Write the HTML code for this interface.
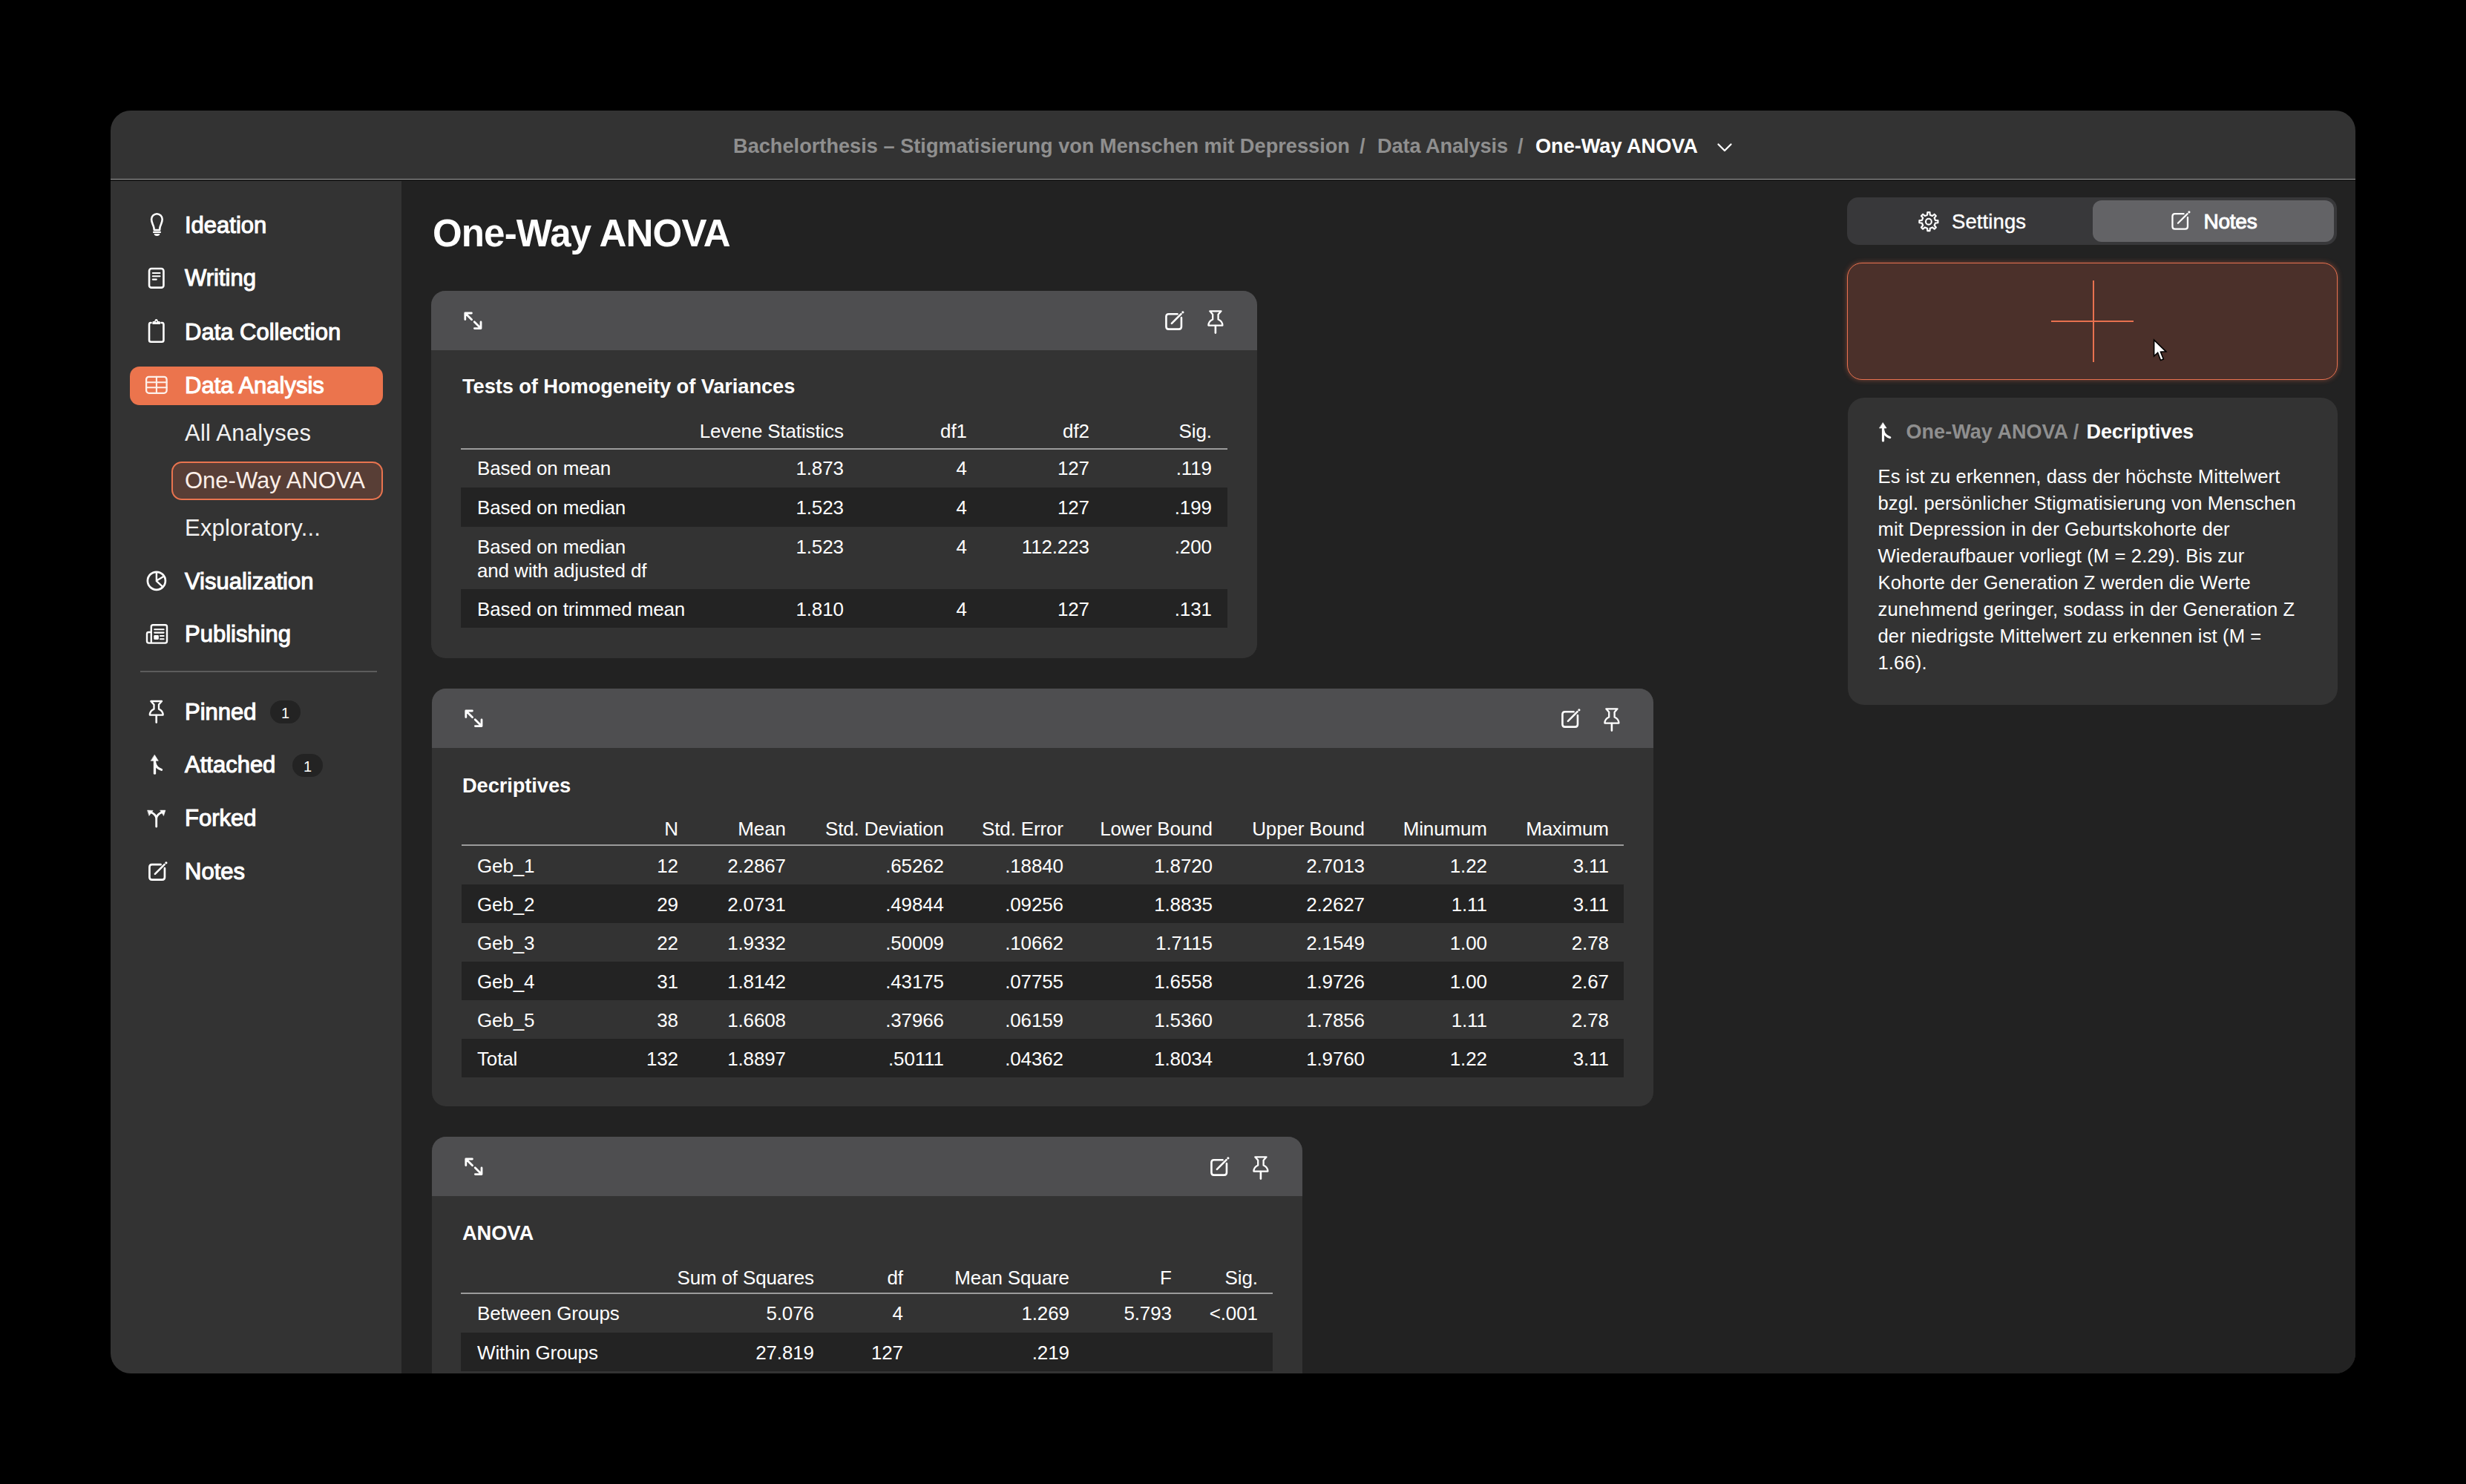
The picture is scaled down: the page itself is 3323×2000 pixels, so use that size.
<!DOCTYPE html>
<html><head><meta charset="utf-8">
<style>
html,body{margin:0;padding:0;background:#000;width:3323px;height:2000px;overflow:hidden;}
body{font-family:"Liberation Sans",sans-serif;position:relative;color:#fff;}
.t{position:absolute;line-height:1;white-space:nowrap;}
.r{position:absolute;}
svg.i{position:absolute;overflow:visible;fill:none;stroke:#fff;stroke-linecap:round;stroke-linejoin:round;}
</style></head><body>
<div class="r" style="left:149px;top:149px;width:3025px;height:1702px;background:#333333;border-radius:27px;overflow:hidden;">
<div class="r" style="left:392px;top:93px;right:0;bottom:0;background:#222222;"></div>
<div class="r" style="left:0;top:91.6px;right:0;height:1.6px;background:#9a9a9a;"></div>
<div class="r" style="left:0;top:93.19999999999999px;right:0;height:2px;background:#1c1c1c;"></div>
</div>
<div class="t" style="top:183.0px;font-size:27.2px;color:#8f8f8f;font-weight:700;left:988px;">Bachelorthesis – Stigmatisierung von Menschen mit Depression</div>
<div class="t" style="top:183.0px;font-size:27.2px;color:#8f8f8f;font-weight:700;left:1832px;">/</div>
<div class="t" style="top:183.0px;font-size:27.2px;color:#8f8f8f;font-weight:700;letter-spacing:-0.1px;left:1856px;">Data Analysis</div>
<div class="t" style="top:183.0px;font-size:27.2px;color:#8f8f8f;font-weight:700;left:2045px;">/</div>
<div class="t" style="top:183.0px;font-size:27.2px;font-weight:700;letter-spacing:-0.05px;left:2069px;">One-Way ANOVA</div>
<svg class="i" style="left:2310px;top:186px;" width="28" height="24" viewBox="0 0 28 24"><path d="M5.5 8.5 L14 17 L22.5 8.5" stroke-width="2.3"/></svg>
<div class="t" style="top:287.6px;font-size:31px;left:249px;-webkit-text-stroke:1.1px #fff;">Ideation</div>
<div class="t" style="top:359.4px;font-size:31px;left:249px;-webkit-text-stroke:1.1px #fff;">Writing</div>
<div class="t" style="top:431.5px;font-size:31px;left:249px;-webkit-text-stroke:1.1px #fff;">Data Collection</div>
<div class="r" style="left:175px;top:494px;width:341px;height:52px;background:#eb744d;border-radius:13px;"></div>
<div class="t" style="top:503.5px;font-size:31px;left:249px;-webkit-text-stroke:1.1px #fff;">Data Analysis</div>
<div class="t" style="top:567.7px;font-size:31px;color:#f2f2f2;letter-spacing:0.25px;left:249px;">All Analyses</div>
<div class="r" style="left:231px;top:622px;width:285px;height:52px;background:#583e36;border:2.5px solid #e9744f;border-radius:14px;box-sizing:border-box;"></div>
<div class="t" style="top:631.8px;font-size:31px;color:#fbeee8;left:249px;">One-Way ANOVA</div>
<div class="t" style="top:696.0px;font-size:31px;color:#f2f2f2;letter-spacing:0.2px;left:249px;">Exploratory...</div>
<div class="t" style="top:767.6px;font-size:31px;left:249px;-webkit-text-stroke:1.1px #fff;">Visualization</div>
<div class="t" style="top:839.4px;font-size:31px;left:249px;-webkit-text-stroke:1.1px #fff;">Publishing</div>
<div class="r" style="left:189px;top:904px;width:319px;height:2px;background:#5c5c5c;"></div>
<div class="t" style="top:943.5px;font-size:31px;left:249px;-webkit-text-stroke:1.1px #fff;">Pinned</div>
<div class="t" style="top:1015.4px;font-size:31px;left:249px;-webkit-text-stroke:1.1px #fff;">Attached</div>
<div class="t" style="top:1087.3px;font-size:31px;left:249px;-webkit-text-stroke:1.1px #fff;">Forked</div>
<div class="t" style="top:1159.2px;font-size:31px;left:249px;-webkit-text-stroke:1.1px #fff;">Notes</div>
<div class="r" style="left:364px;top:944px;width:41px;height:31px;background:#232323;border-radius:16px;"></div>
<div class="t" style="top:951.1px;font-size:20px;left:-615.5px;width:2000px;text-align:center;">1</div>
<div class="r" style="left:394px;top:1016px;width:41px;height:31px;background:#232323;border-radius:16px;"></div>
<div class="t" style="top:1023.1px;font-size:20px;left:-585.5px;width:2000px;text-align:center;">1</div>
<svg class="i" style="left:190px;top:280px;" width="50" height="50" viewBox="0 0 50 50"><path d="M17.8 30 L17.3 26.5 C16.6 22.8 14.1 20.3 14.1 15.6 A7.3 7.3 0 0 1 28.7 15.6 C28.7 20.3 26.2 22.8 25.5 26.5 L25.1 30 Z" stroke-width="2.6"/><path d="M17 32.9 H26" stroke-width="2.1"/><path d="M17.6 35 H25.4 Q25.2 37.9 21.5 37.9 Q17.8 37.9 17.6 35 Z" fill="#fff" stroke="none"/></svg>
<svg class="i" style="left:190px;top:352px;" width="50" height="50" viewBox="0 0 50 50"><rect x="11.05" y="10.05" width="19.4" height="25.6" rx="3" stroke-width="2.6"/><path d="M15.8 16 H25.5 M15.8 20.2 H25.5 M15.8 24.6 H20.8" stroke-width="2.1"/></svg>
<svg class="i" style="left:190px;top:422px;" width="50" height="50" viewBox="0 0 50 50"><path d="M13.5 13 H12.8 Q11.05 13 11.05 15.5 V36.5 Q11.05 38.7 13.5 38.7 H28 Q30.45 38.7 30.45 36.5 V15.5 Q30.45 13 28.5 13 H27.5" stroke-width="2.6"/><path d="M15.4 15 V12.3 Q15.4 11 17 11 H18.3 Q18.6 8.1 20.6 8.1 Q22.6 8.1 22.9 11 H24.3 Q25.9 11 25.9 12.3 V15 Z" fill="#fff" stroke="none"/><circle cx="20.6" cy="11.3" r="0.9" fill="#333" stroke="none"/></svg>
<svg class="i" style="left:190px;top:495px;stroke:#fdf0ea;" width="50" height="50" viewBox="0 0 50 50"><rect x="7.1" y="12.9" width="27.5" height="21.9" rx="3.5" stroke-width="2.3"/><path d="M7.1 20.2 H34.6 M7.1 27.3 H34.6 M20.9 12.9 V34.8" stroke-width="2.1"/></svg>
<svg class="i" style="left:190px;top:758px;" width="50" height="50" viewBox="0 0 50 50"><circle cx="20.9" cy="24.8" r="12" stroke-width="2.7"/><path d="M20.9 13 V25.2 L28.8 32.3 M21.5 24.2 L30.6 18.8" stroke-width="2.4" stroke-linecap="butt"/></svg>
<svg class="i" style="left:190px;top:830px;" width="50" height="50" viewBox="0 0 50 50"><path d="M13.8 36.6 H32.6 Q35 36.6 35 34 V14.6 Q35 12.2 32.6 12.2 H16.2 Q13.8 12.2 13.8 14.6 V36.6 H10.5 Q8 36.6 8 34 V24.2 Q8 22 10.3 22 H13.8" stroke-width="2.4"/><path d="M18.2 18.2 H30.6 M18.2 22.6 H30.6 M26 27 H30.6 M26 31.3 H30.6" stroke-width="2.1"/><rect x="17.3" y="26" width="6.6" height="6" rx="1.2" fill="#fff" stroke="none"/></svg>
<svg class="i" style="left:190px;top:935px;" width="50" height="50" viewBox="0 0 50 50"><path d="M13.3 10 H28 L24 14.6 V20.6 C26.8 21.8 29.6 24.5 29.7 28.6 H11.8 C11.9 24.5 14.7 21.8 17.5 20.6 V14.6 Z" stroke-width="2.3"/><path d="M20.7 29 V35.5 L20.7 38.6" stroke-width="2.6"/></svg>
<svg class="i" style="left:190px;top:1007px;" width="50" height="50" viewBox="0 0 50 50"><path d="M18.4 10.6 L23.3 18.3 H13.5 Z" fill="#fff" stroke="#fff" stroke-width="0.6"/><path d="M18.5 17 V35.2" stroke-width="3.3"/><path d="M18.8 21 C19.5 26 22.5 28.5 27.6 30.4" stroke-width="3.1"/></svg>
<svg class="i" style="left:190px;top:1078px;" width="50" height="50" viewBox="0 0 50 50"><path d="M20.7 36 V25 C20.7 21.5 17 18 13.5 16.8 M20.7 25 C20.7 21.5 24.5 18 28 16.8" stroke-width="2.8"/><path d="M8.9 14.1 L16.1 14.4 L11.1 21.1 Z M26 14.1 L32.9 14.1 L30.6 21.1 Z" fill="#fff" stroke="#fff" stroke-width="0.6"/></svg>
<svg class="i" style="left:190px;top:1150px;" width="50" height="50" viewBox="0 0 50 50"><path d="M26.6 15.2 H14.8 Q11.45 15.2 11.45 18.6 V32.2 Q11.45 35.6 14.8 35.6 H28.6 Q31.95 35.6 31.95 32.2 V20" stroke-width="2.7"/><path d="M18.9 27.8 L31.6 15.1" stroke-width="2.6"/><circle cx="33.9" cy="12.8" r="1.6" fill="#fff" stroke="none"/></svg>
<div class="t" style="top:288.8px;font-size:51px;font-weight:700;letter-spacing:-0.85px;left:583px;">One-Way ANOVA</div>
<div class="r" style="left:581px;top:392px;width:1113px;height:495px;background:#333333;border-radius:19px 19px 19px 19px;overflow:hidden;"><div class="r" style="left:0;top:0;right:0;height:80px;background:#4e4e50;"></div></div>
<svg class="i" style="left:610px;top:400px;" width="60" height="60" viewBox="0 0 60 60"><path d="M16.8 30.6 V22 H25.4 M17.6 22.8 L25.6 30.8 M38 34 V42.6 H29.4 M37.2 41.8 L29.2 33.8" stroke-width="2.8"/></svg>
<svg class="i" style="left:1560.1px;top:407.9px;" width="50" height="50" viewBox="0 0 50 50"><path d="M26.6 15.2 H14.8 Q11.45 15.2 11.45 18.6 V32.2 Q11.45 35.6 14.8 35.6 H28.6 Q31.95 35.6 31.95 32.2 V20" stroke-width="2.6"/><path d="M18.9 27.8 L31.6 15.1" stroke-width="2.6"/><circle cx="33.9" cy="12.8" r="1.6" fill="#fff" stroke="none"/></svg>
<svg class="i" style="left:1616.6px;top:408.6px;" width="50" height="50" viewBox="0 0 50 50"><path d="M13.3 10.3 H28.5 L24.6 14.8 V21.5 C27.5 22.7 30.3 25.4 30.4 29.6 H11.4 C11.5 25.4 14.3 22.7 17.2 21.5 V14.8 Z" stroke-width="2.3"/><path d="M20.9 30 V36.5 L20.9 39.6" stroke-width="2.6"/></svg>
<div class="t" style="top:507.1px;font-size:27.3px;font-weight:700;letter-spacing:-0.1px;left:623px;">Tests of Homogeneity of Variances</div>
<div class="t" style="top:568.0px;font-size:26px;letter-spacing:-0.15px;right:2186.2px;text-align:right;">Levene Statistics</div>
<div class="t" style="top:568.0px;font-size:26px;letter-spacing:-0.15px;right:2020.2px;text-align:right;">df1</div>
<div class="t" style="top:568.0px;font-size:26px;letter-spacing:-0.15px;right:1855.2px;text-align:right;">df2</div>
<div class="t" style="top:568.0px;font-size:26px;letter-spacing:-0.15px;right:1690.2px;text-align:right;">Sig.</div>
<div class="r" style="left:621px;top:604px;width:1033px;height:2px;background:#9b9b9b;"></div>
<div class="t" style="top:618.0px;font-size:26px;letter-spacing:-0.15px;left:643px;">Based on mean</div>
<div class="t" style="top:618.0px;font-size:26px;letter-spacing:-0.15px;right:2186.2px;text-align:right;">1.873</div>
<div class="t" style="top:618.0px;font-size:26px;letter-spacing:-0.15px;right:2020.2px;text-align:right;">4</div>
<div class="t" style="top:618.0px;font-size:26px;letter-spacing:-0.15px;right:1855.2px;text-align:right;">127</div>
<div class="t" style="top:618.0px;font-size:26px;letter-spacing:-0.15px;right:1690.2px;text-align:right;">.119</div>
<div class="r" style="left:621px;top:657px;width:1033px;height:53px;background:#232323;"></div>
<div class="t" style="top:670.5px;font-size:26px;letter-spacing:-0.15px;left:643px;">Based on median</div>
<div class="t" style="top:670.5px;font-size:26px;letter-spacing:-0.15px;right:2186.2px;text-align:right;">1.523</div>
<div class="t" style="top:670.5px;font-size:26px;letter-spacing:-0.15px;right:2020.2px;text-align:right;">4</div>
<div class="t" style="top:670.5px;font-size:26px;letter-spacing:-0.15px;right:1855.2px;text-align:right;">127</div>
<div class="t" style="top:670.5px;font-size:26px;letter-spacing:-0.15px;right:1690.2px;text-align:right;">.199</div>
<div class="t" style="top:724.0px;font-size:26px;letter-spacing:-0.15px;left:643px;">Based on median</div>
<div class="t" style="top:756.0px;font-size:26px;letter-spacing:-0.15px;left:643px;">and with adjusted df</div>
<div class="t" style="top:724.0px;font-size:26px;letter-spacing:-0.15px;right:2186.2px;text-align:right;">1.523</div>
<div class="t" style="top:724.0px;font-size:26px;letter-spacing:-0.15px;right:2020.2px;text-align:right;">4</div>
<div class="t" style="top:724.0px;font-size:26px;letter-spacing:-0.15px;right:1855.2px;text-align:right;">112.223</div>
<div class="t" style="top:724.0px;font-size:26px;letter-spacing:-0.15px;right:1690.2px;text-align:right;">.200</div>
<div class="r" style="left:621px;top:794px;width:1033px;height:52px;background:#232323;"></div>
<div class="t" style="top:808.0px;font-size:26px;letter-spacing:-0.15px;left:643px;">Based on trimmed mean</div>
<div class="t" style="top:808.0px;font-size:26px;letter-spacing:-0.15px;right:2186.2px;text-align:right;">1.810</div>
<div class="t" style="top:808.0px;font-size:26px;letter-spacing:-0.15px;right:2020.2px;text-align:right;">4</div>
<div class="t" style="top:808.0px;font-size:26px;letter-spacing:-0.15px;right:1855.2px;text-align:right;">127</div>
<div class="t" style="top:808.0px;font-size:26px;letter-spacing:-0.15px;right:1690.2px;text-align:right;">.131</div>
<div class="r" style="left:582px;top:928px;width:1646px;height:563px;background:#333333;border-radius:19px 19px 19px 19px;overflow:hidden;"><div class="r" style="left:0;top:0;right:0;height:80px;background:#4e4e50;"></div></div>
<svg class="i" style="left:611px;top:936px;" width="60" height="60" viewBox="0 0 60 60"><path d="M16.8 30.6 V22 H25.4 M17.6 22.8 L25.6 30.8 M38 34 V42.6 H29.4 M37.2 41.8 L29.2 33.8" stroke-width="2.8"/></svg>
<svg class="i" style="left:2094.1px;top:943.9px;" width="50" height="50" viewBox="0 0 50 50"><path d="M26.6 15.2 H14.8 Q11.45 15.2 11.45 18.6 V32.2 Q11.45 35.6 14.8 35.6 H28.6 Q31.95 35.6 31.95 32.2 V20" stroke-width="2.6"/><path d="M18.9 27.8 L31.6 15.1" stroke-width="2.6"/><circle cx="33.9" cy="12.8" r="1.6" fill="#fff" stroke="none"/></svg>
<svg class="i" style="left:2150.6px;top:944.6px;" width="50" height="50" viewBox="0 0 50 50"><path d="M13.3 10.3 H28.5 L24.6 14.8 V21.5 C27.5 22.7 30.3 25.4 30.4 29.6 H11.4 C11.5 25.4 14.3 22.7 17.2 21.5 V14.8 Z" stroke-width="2.3"/><path d="M20.9 30 V36.5 L20.9 39.6" stroke-width="2.6"/></svg>
<div class="t" style="top:1044.5px;font-size:27.3px;font-weight:700;letter-spacing:-0.1px;left:623px;">Decriptives</div>
<div class="t" style="top:1104.0px;font-size:26px;letter-spacing:-0.15px;right:2409.2px;text-align:right;">N</div>
<div class="t" style="top:1104.0px;font-size:26px;letter-spacing:-0.15px;right:2264.2px;text-align:right;">Mean</div>
<div class="t" style="top:1104.0px;font-size:26px;letter-spacing:-0.15px;right:2051.2px;text-align:right;">Std. Deviation</div>
<div class="t" style="top:1104.0px;font-size:26px;letter-spacing:-0.15px;right:1890.2px;text-align:right;">Std. Error</div>
<div class="t" style="top:1104.0px;font-size:26px;letter-spacing:-0.15px;right:1689.2px;text-align:right;">Lower Bound</div>
<div class="t" style="top:1104.0px;font-size:26px;letter-spacing:-0.15px;right:1484.2px;text-align:right;">Upper Bound</div>
<div class="t" style="top:1104.0px;font-size:26px;letter-spacing:-0.15px;right:1319.2px;text-align:right;">Minumum</div>
<div class="t" style="top:1104.0px;font-size:26px;letter-spacing:-0.15px;right:1155.2px;text-align:right;">Maximum</div>
<div class="r" style="left:622px;top:1138px;width:1566px;height:2px;background:#9b9b9b;"></div>
<div class="t" style="top:1154.0px;font-size:26px;letter-spacing:-0.15px;left:643px;">Geb_1</div>
<div class="t" style="top:1154.0px;font-size:26px;letter-spacing:-0.15px;right:2409.2px;text-align:right;">12</div>
<div class="t" style="top:1154.0px;font-size:26px;letter-spacing:-0.15px;right:2264.2px;text-align:right;">2.2867</div>
<div class="t" style="top:1154.0px;font-size:26px;letter-spacing:-0.15px;right:2051.2px;text-align:right;">.65262</div>
<div class="t" style="top:1154.0px;font-size:26px;letter-spacing:-0.15px;right:1890.2px;text-align:right;">.18840</div>
<div class="t" style="top:1154.0px;font-size:26px;letter-spacing:-0.15px;right:1689.2px;text-align:right;">1.8720</div>
<div class="t" style="top:1154.0px;font-size:26px;letter-spacing:-0.15px;right:1484.2px;text-align:right;">2.7013</div>
<div class="t" style="top:1154.0px;font-size:26px;letter-spacing:-0.15px;right:1319.2px;text-align:right;">1.22</div>
<div class="t" style="top:1154.0px;font-size:26px;letter-spacing:-0.15px;right:1155.2px;text-align:right;">3.11</div>
<div class="r" style="left:622px;top:1192px;width:1566px;height:52px;background:#232323;"></div>
<div class="t" style="top:1206.0px;font-size:26px;letter-spacing:-0.15px;left:643px;">Geb_2</div>
<div class="t" style="top:1206.0px;font-size:26px;letter-spacing:-0.15px;right:2409.2px;text-align:right;">29</div>
<div class="t" style="top:1206.0px;font-size:26px;letter-spacing:-0.15px;right:2264.2px;text-align:right;">2.0731</div>
<div class="t" style="top:1206.0px;font-size:26px;letter-spacing:-0.15px;right:2051.2px;text-align:right;">.49844</div>
<div class="t" style="top:1206.0px;font-size:26px;letter-spacing:-0.15px;right:1890.2px;text-align:right;">.09256</div>
<div class="t" style="top:1206.0px;font-size:26px;letter-spacing:-0.15px;right:1689.2px;text-align:right;">1.8835</div>
<div class="t" style="top:1206.0px;font-size:26px;letter-spacing:-0.15px;right:1484.2px;text-align:right;">2.2627</div>
<div class="t" style="top:1206.0px;font-size:26px;letter-spacing:-0.15px;right:1319.2px;text-align:right;">1.11</div>
<div class="t" style="top:1206.0px;font-size:26px;letter-spacing:-0.15px;right:1155.2px;text-align:right;">3.11</div>
<div class="t" style="top:1258.0px;font-size:26px;letter-spacing:-0.15px;left:643px;">Geb_3</div>
<div class="t" style="top:1258.0px;font-size:26px;letter-spacing:-0.15px;right:2409.2px;text-align:right;">22</div>
<div class="t" style="top:1258.0px;font-size:26px;letter-spacing:-0.15px;right:2264.2px;text-align:right;">1.9332</div>
<div class="t" style="top:1258.0px;font-size:26px;letter-spacing:-0.15px;right:2051.2px;text-align:right;">.50009</div>
<div class="t" style="top:1258.0px;font-size:26px;letter-spacing:-0.15px;right:1890.2px;text-align:right;">.10662</div>
<div class="t" style="top:1258.0px;font-size:26px;letter-spacing:-0.15px;right:1689.2px;text-align:right;">1.7115</div>
<div class="t" style="top:1258.0px;font-size:26px;letter-spacing:-0.15px;right:1484.2px;text-align:right;">2.1549</div>
<div class="t" style="top:1258.0px;font-size:26px;letter-spacing:-0.15px;right:1319.2px;text-align:right;">1.00</div>
<div class="t" style="top:1258.0px;font-size:26px;letter-spacing:-0.15px;right:1155.2px;text-align:right;">2.78</div>
<div class="r" style="left:622px;top:1296px;width:1566px;height:52px;background:#232323;"></div>
<div class="t" style="top:1310.0px;font-size:26px;letter-spacing:-0.15px;left:643px;">Geb_4</div>
<div class="t" style="top:1310.0px;font-size:26px;letter-spacing:-0.15px;right:2409.2px;text-align:right;">31</div>
<div class="t" style="top:1310.0px;font-size:26px;letter-spacing:-0.15px;right:2264.2px;text-align:right;">1.8142</div>
<div class="t" style="top:1310.0px;font-size:26px;letter-spacing:-0.15px;right:2051.2px;text-align:right;">.43175</div>
<div class="t" style="top:1310.0px;font-size:26px;letter-spacing:-0.15px;right:1890.2px;text-align:right;">.07755</div>
<div class="t" style="top:1310.0px;font-size:26px;letter-spacing:-0.15px;right:1689.2px;text-align:right;">1.6558</div>
<div class="t" style="top:1310.0px;font-size:26px;letter-spacing:-0.15px;right:1484.2px;text-align:right;">1.9726</div>
<div class="t" style="top:1310.0px;font-size:26px;letter-spacing:-0.15px;right:1319.2px;text-align:right;">1.00</div>
<div class="t" style="top:1310.0px;font-size:26px;letter-spacing:-0.15px;right:1155.2px;text-align:right;">2.67</div>
<div class="t" style="top:1362.0px;font-size:26px;letter-spacing:-0.15px;left:643px;">Geb_5</div>
<div class="t" style="top:1362.0px;font-size:26px;letter-spacing:-0.15px;right:2409.2px;text-align:right;">38</div>
<div class="t" style="top:1362.0px;font-size:26px;letter-spacing:-0.15px;right:2264.2px;text-align:right;">1.6608</div>
<div class="t" style="top:1362.0px;font-size:26px;letter-spacing:-0.15px;right:2051.2px;text-align:right;">.37966</div>
<div class="t" style="top:1362.0px;font-size:26px;letter-spacing:-0.15px;right:1890.2px;text-align:right;">.06159</div>
<div class="t" style="top:1362.0px;font-size:26px;letter-spacing:-0.15px;right:1689.2px;text-align:right;">1.5360</div>
<div class="t" style="top:1362.0px;font-size:26px;letter-spacing:-0.15px;right:1484.2px;text-align:right;">1.7856</div>
<div class="t" style="top:1362.0px;font-size:26px;letter-spacing:-0.15px;right:1319.2px;text-align:right;">1.11</div>
<div class="t" style="top:1362.0px;font-size:26px;letter-spacing:-0.15px;right:1155.2px;text-align:right;">2.78</div>
<div class="r" style="left:622px;top:1400px;width:1566px;height:52px;background:#232323;"></div>
<div class="t" style="top:1414.0px;font-size:26px;letter-spacing:-0.15px;left:643px;">Total</div>
<div class="t" style="top:1414.0px;font-size:26px;letter-spacing:-0.15px;right:2409.2px;text-align:right;">132</div>
<div class="t" style="top:1414.0px;font-size:26px;letter-spacing:-0.15px;right:2264.2px;text-align:right;">1.8897</div>
<div class="t" style="top:1414.0px;font-size:26px;letter-spacing:-0.15px;right:2051.2px;text-align:right;">.50111</div>
<div class="t" style="top:1414.0px;font-size:26px;letter-spacing:-0.15px;right:1890.2px;text-align:right;">.04362</div>
<div class="t" style="top:1414.0px;font-size:26px;letter-spacing:-0.15px;right:1689.2px;text-align:right;">1.8034</div>
<div class="t" style="top:1414.0px;font-size:26px;letter-spacing:-0.15px;right:1484.2px;text-align:right;">1.9760</div>
<div class="t" style="top:1414.0px;font-size:26px;letter-spacing:-0.15px;right:1319.2px;text-align:right;">1.22</div>
<div class="t" style="top:1414.0px;font-size:26px;letter-spacing:-0.15px;right:1155.2px;text-align:right;">3.11</div>
<div class="r" style="left:582px;top:1532px;width:1173px;height:368px;background:#333333;border-radius:19px 19px 0px 0px;overflow:hidden;"><div class="r" style="left:0;top:0;right:0;height:80px;background:#4e4e50;"></div></div>
<svg class="i" style="left:611px;top:1540px;" width="60" height="60" viewBox="0 0 60 60"><path d="M16.8 30.6 V22 H25.4 M17.6 22.8 L25.6 30.8 M38 34 V42.6 H29.4 M37.2 41.8 L29.2 33.8" stroke-width="2.8"/></svg>
<svg class="i" style="left:1621.1px;top:1547.9px;" width="50" height="50" viewBox="0 0 50 50"><path d="M26.6 15.2 H14.8 Q11.45 15.2 11.45 18.6 V32.2 Q11.45 35.6 14.8 35.6 H28.6 Q31.95 35.6 31.95 32.2 V20" stroke-width="2.6"/><path d="M18.9 27.8 L31.6 15.1" stroke-width="2.6"/><circle cx="33.9" cy="12.8" r="1.6" fill="#fff" stroke="none"/></svg>
<svg class="i" style="left:1677.6px;top:1548.6px;" width="50" height="50" viewBox="0 0 50 50"><path d="M13.3 10.3 H28.5 L24.6 14.8 V21.5 C27.5 22.7 30.3 25.4 30.4 29.6 H11.4 C11.5 25.4 14.3 22.7 17.2 21.5 V14.8 Z" stroke-width="2.3"/><path d="M20.9 30 V36.5 L20.9 39.6" stroke-width="2.6"/></svg>
<div class="t" style="top:1647.9px;font-size:27.3px;font-weight:700;letter-spacing:-0.1px;left:623px;">ANOVA</div>
<div class="t" style="top:1708.5px;font-size:26px;letter-spacing:-0.15px;right:2226.2px;text-align:right;">Sum of Squares</div>
<div class="t" style="top:1708.5px;font-size:26px;letter-spacing:-0.15px;right:2106.2px;text-align:right;">df</div>
<div class="t" style="top:1708.5px;font-size:26px;letter-spacing:-0.15px;right:1882.2px;text-align:right;">Mean Square</div>
<div class="t" style="top:1708.5px;font-size:26px;letter-spacing:-0.15px;right:1744.2px;text-align:right;">F</div>
<div class="t" style="top:1708.5px;font-size:26px;letter-spacing:-0.15px;right:1628.2px;text-align:right;">Sig.</div>
<div class="r" style="left:621px;top:1742px;width:1094px;height:2px;background:#9b9b9b;"></div>
<div class="t" style="top:1757.0px;font-size:26px;letter-spacing:-0.15px;left:643px;">Between Groups</div>
<div class="t" style="top:1757.0px;font-size:26px;letter-spacing:-0.15px;right:2226.2px;text-align:right;">5.076</div>
<div class="t" style="top:1757.0px;font-size:26px;letter-spacing:-0.15px;right:2106.2px;text-align:right;">4</div>
<div class="t" style="top:1757.0px;font-size:26px;letter-spacing:-0.15px;right:1882.2px;text-align:right;">1.269</div>
<div class="t" style="top:1757.0px;font-size:26px;letter-spacing:-0.15px;right:1744.2px;text-align:right;">5.793</div>
<div class="t" style="top:1757.0px;font-size:26px;letter-spacing:-0.15px;right:1628.2px;text-align:right;"><.001</div>
<div class="r" style="left:621px;top:1796px;width:1094px;height:52px;background:#232323;"></div>
<div class="t" style="top:1809.5px;font-size:26px;letter-spacing:-0.15px;left:643px;">Within Groups</div>
<div class="t" style="top:1809.5px;font-size:26px;letter-spacing:-0.15px;right:2226.2px;text-align:right;">27.819</div>
<div class="t" style="top:1809.5px;font-size:26px;letter-spacing:-0.15px;right:2106.2px;text-align:right;">127</div>
<div class="t" style="top:1809.5px;font-size:26px;letter-spacing:-0.15px;right:1882.2px;text-align:right;">.219</div>
<div class="r" style="left:0px;top:1851px;width:3323px;height:149px;background:#000;"></div>
<div class="r" style="left:2489px;top:266px;width:660px;height:64px;background:#38383a;border-radius:15px;"></div>
<div class="r" style="left:2820px;top:270px;width:325px;height:56px;background:#636366;border-radius:12px;"></div>
<svg class="i" style="left:2570px;top:270px;" width="50" height="50" viewBox="0 0 50 50"><path d="M27.02 19.69 L27.35 16.20 L30.45 16.20 L30.78 19.69 L33.94 21.00 L36.64 18.76 L38.84 20.96 L36.60 23.66 L37.91 26.82 L41.40 27.15 L41.40 30.25 L37.91 30.58 L36.60 33.74 L38.84 36.44 L36.64 38.64 L33.94 36.40 L30.78 37.71 L30.45 41.20 L27.35 41.20 L27.02 37.71 L23.86 36.40 L21.16 38.64 L18.96 36.44 L21.20 33.74 L19.89 30.58 L16.40 30.25 L16.40 27.15 L19.89 26.82 L21.20 23.66 L18.96 20.96 L21.16 18.76 L23.86 21.00 Z" stroke-width="2.2"/><circle cx="28.90000000000009" cy="28.69999999999999" r="3.9" stroke-width="2.1"/></svg>
<div class="t" style="top:284.9px;font-size:27.5px;letter-spacing:0.1px;left:2630px;-webkit-text-stroke:0.4px #fff;">Settings</div>
<svg class="i" style="left:2916px;top:273px;" width="50" height="50" viewBox="0 0 50 50"><path d="M26.6 15.2 H14.8 Q11.45 15.2 11.45 18.6 V32.2 Q11.45 35.6 14.8 35.6 H28.6 Q31.95 35.6 31.95 32.2 V20" stroke-width="2.3"/><path d="M18.9 27.8 L31.6 15.1" stroke-width="2.2"/><circle cx="33.9" cy="12.8" r="1.6" fill="#fff" stroke="none"/></svg>
<div class="t" style="top:284.6px;font-size:28px;letter-spacing:-0.25px;left:2969.5px;-webkit-text-stroke:1px #fff;">Notes</div>
<div class="r" style="left:2489px;top:354px;width:661px;height:158px;background:#4b302a;border:1.7px solid #e8714f;border-radius:20px;box-sizing:border-box;box-shadow:0 0 7px rgba(232,113,79,0.45);"></div>
<div class="r" style="left:2764px;top:432px;width:111px;height:2px;background:#e8714f;"></div>
<div class="r" style="left:2820px;top:378px;width:2px;height:110px;background:#e8714f;"></div>
<svg class="i" style="left:2880px;top:440px;stroke-linejoin:miter;" width="60" height="60" viewBox="0 0 60 60"><path d="M22.6 18.2 V40 L27.6 35.3 L31.5 45.5 L35.3 44 L31.5 34.2 L38.8 33.9 Z" fill="#fff" stroke="#000" stroke-width="1.6"/></svg>
<div class="r" style="left:2490px;top:536px;width:660px;height:414px;background:#333333;border-radius:22px;"></div>
<svg class="i" style="left:2520px;top:560px;" width="40" height="40" viewBox="0 0 40 40"><path d="M17.4 9.8 L22.1 17 H12.7 Z" fill="#fff" stroke="#fff" stroke-width="0.6"/><path d="M17.5 16 V34" stroke-width="3.2"/><path d="M17.8 20 C18.5 25 21.5 27.8 26.8 29.6" stroke-width="3"/></svg>
<div class="t" style="top:569.1px;font-size:27px;color:#8f8f8f;font-weight:700;letter-spacing:0.05px;left:2568.5px;">One-Way ANOVA /</div>
<div class="t" style="top:569.1px;font-size:27px;font-weight:700;letter-spacing:-0.1px;left:2811.5px;">Decriptives</div>
<div class="t" style="top:629.6px;font-size:25.6px;letter-spacing:0.12px;left:2530.5px;">Es ist zu erkennen, dass der höchste Mittelwert</div>
<div class="t" style="top:665.5px;font-size:25.6px;letter-spacing:0.12px;left:2530.5px;">bzgl. persönlicher Stigmatisierung von Menschen</div>
<div class="t" style="top:701.3px;font-size:25.6px;letter-spacing:0.12px;left:2530.5px;">mit Depression in der Geburtskohorte der</div>
<div class="t" style="top:737.2px;font-size:25.6px;letter-spacing:0.12px;left:2530.5px;">Wiederaufbauer vorliegt (M = 2.29). Bis zur</div>
<div class="t" style="top:773.0px;font-size:25.6px;letter-spacing:0.12px;left:2530.5px;">Kohorte der Generation Z werden die Werte</div>
<div class="t" style="top:808.9px;font-size:25.6px;letter-spacing:0.12px;left:2530.5px;">zunehmend geringer, sodass in der Generation Z</div>
<div class="t" style="top:844.7px;font-size:25.6px;letter-spacing:0.12px;left:2530.5px;">der niedrigste Mittelwert zu erkennen ist (M =</div>
<div class="t" style="top:880.6px;font-size:25.6px;letter-spacing:0.12px;left:2530.5px;">1.66).</div>
</body></html>
